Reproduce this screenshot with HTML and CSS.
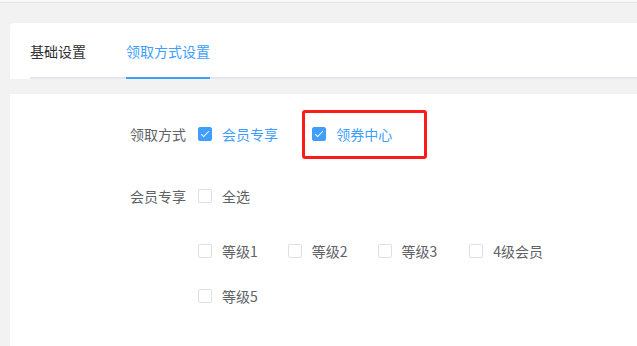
FILE: index.html
```html
<!DOCTYPE html>
<html lang="zh">
<head>
  <meta charset="UTF-8">
  <meta name="viewport" content="width=device-width, initial-scale=1">
  <title>领取方式设置</title>
  <link rel="stylesheet" href="styles.css">
</head>
<body>
  <div class="topbar"></div>

  <div class="page">
    <!-- 选项卡 -->
    <div class="card tabs-card">
      <div class="tabs">
        <div class="tab">基础设置</div>
        <div class="tab active">领取方式设置</div>
      </div>
    </div>

    <!-- 表单 -->
    <div class="card form-card">
      <div class="form-item">
        <label class="form-label">领取方式</label>
        <div class="form-content">
          <span class="check checked"><span class="box"></span><span class="text">会员专享</span></span>
          <span class="check checked marked"><span class="box"></span><span class="text">领券中心</span></span>
        </div>
      </div>

      <div class="form-item">
        <label class="form-label">会员专享</label>
        <div class="form-content">
          <span class="check"><span class="box"></span><span class="text">全选</span></span>
          <div class="group">
            <span class="check"><span class="box"></span><span class="text">等级1</span></span>
            <span class="check"><span class="box"></span><span class="text">等级2</span></span>
            <span class="check"><span class="box"></span><span class="text">等级3</span></span>
            <span class="check"><span class="box"></span><span class="text">4级会员</span></span>
            <span class="check"><span class="box"></span><span class="text">等级5</span></span>
          </div>
        </div>
      </div>
    </div>
  </div>
</body>
</html>
```

FILE: styles.css
```css
/* 页面底色 */
body {
  margin: 0;
  font-family: "Noto Sans CJK SC", "Microsoft YaHei", sans-serif;
  font-size: 14px;
  color: #606266;
  background: #f2f2f2;
  overflow: hidden;
}

.topbar {
  height: 2px;
  background: #f7f7f7;
  border-bottom: 1px solid #e4e4e4;
}

.page {
  padding: 20px 0 0 10px;
}

.card {
  background: #ffffff;
}

/* 选项卡 */
.tabs-card {
  border-radius: 4px 0 0 0;
  padding-left: 20px;
}

.tabs {
  display: flex;
  border-bottom: 2px solid #e4e7ed;
}

.tab {
  padding: 18px 20px 16px;
  line-height: 20px;
  color: #303133;
  margin-bottom: -2px;
  border-bottom: 2px solid transparent;
}

.tab:first-child {
  padding-left: 0;
}

.tab.active {
  color: #409eff;
  border-bottom-color: #409eff;
  padding-right: 0;
  padding-left: 0;
  margin-left: 20px;
}

/* 表单 */
.form-card {
  margin-top: 15px;
  padding-top: 20px;
  height: 232px;
}

.form-item {
  display: flex;
  margin-bottom: 22px;
}

.form-label {
  width: 176px;
  padding-right: 12px;
  text-align: right;
  line-height: 40px;
  flex-shrink: 0;
}

.form-content {
  flex: 1;
}

.check {
  display: inline-flex;
  align-items: center;
  height: 40px;
  margin-right: 30px;
  vertical-align: top;
  position: relative;
}

.check .box {
  width: 14px;
  height: 14px;
  box-sizing: border-box;
  border: 1px solid #dcdfe6;
  border-radius: 2px;
  background: #fff;
  position: relative;
}

.check .text {
  padding-left: 10px;
  color: #606266;
}

.check.checked .box {
  background: #409eff;
  border-color: #409eff;
}

.check.checked .box::after {
  content: "";
  position: absolute;
  left: 4px;
  top: 1px;
  width: 3px;
  height: 7px;
  border: 1px solid #fff;
  border-left: 0;
  border-top: 0;
  transform: rotate(45deg);
}

.check.checked .text {
  color: #409eff;
}

/* 红色标注框 */
.check.marked {
  margin-left: 1px;
}

.check.marked::after {
  content: "";
  position: absolute;
  top: -4px;
  bottom: -5px;
  left: -10px;
  right: -35px;
  border: 3px solid #ff1a1a;
  border-radius: 3px;
}

.group {
  display: flex;
  flex-wrap: wrap;
  width: 400px;
  margin-top: 15px;
  row-gap: 5px;
}

.group .check:nth-child(4) {
  margin-left: 2px;
}
```
